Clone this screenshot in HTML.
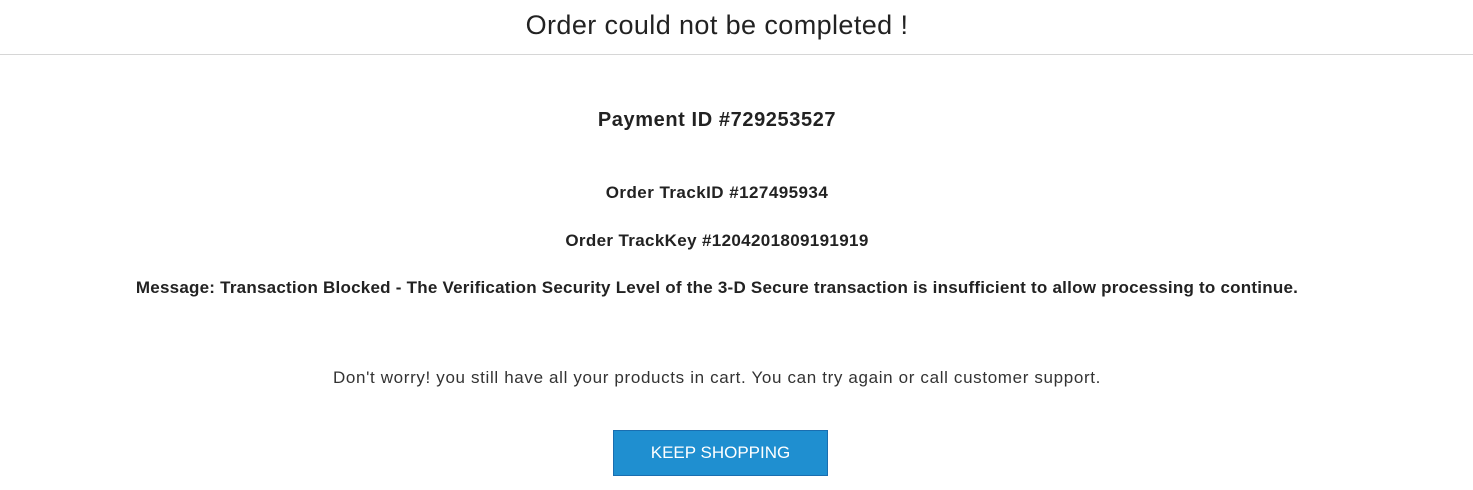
<!DOCTYPE html>
<html><head><meta charset="utf-8"><style>
body{margin:0;width:1473px;height:490px;background:#fff;font-family:"Liberation Sans",Arial,sans-serif;color:#222;position:relative;overflow:hidden}
.t{position:absolute;left:0;width:1434px;text-align:center;white-space:nowrap}
.hr{position:absolute;left:0;right:0;top:54px;height:1px;background:#d6d6d6}
.btn{position:absolute;left:613px;top:430px;width:213px;height:44px;background:#1f8fd0;border:1px solid #1a6eb0;color:#fff;font-size:17px;line-height:44px;text-align:center;box-sizing:content-box}
</style></head><body>
<div class="t" style="top:10px;font-size:27px;color:#222;letter-spacing:0.4px">Order could not be completed !</div>
<div class="hr"></div>
<div class="t" style="top:109px;font-size:20px;font-weight:bold;letter-spacing:0.6px">Payment ID #729253527</div>
<div class="t" style="top:183px;font-size:17px;font-weight:bold;letter-spacing:0.45px">Order TrackID #127495934</div>
<div class="t" style="top:231px;font-size:17px;font-weight:bold;letter-spacing:0.35px">Order TrackKey #1204201809191919</div>
<div class="t" style="top:278px;font-size:17px;font-weight:bold;letter-spacing:0.23px">Message: Transaction Blocked - The Verification Security Level of the 3-D Secure transaction is insufficient to allow processing to continue.</div>
<div class="t" style="top:368px;font-size:17px;color:#333;letter-spacing:0.65px">Don't worry! you still have all your products in cart. You can try again or call customer support.</div>
<div class="btn">KEEP SHOPPING</div>
</body></html>
